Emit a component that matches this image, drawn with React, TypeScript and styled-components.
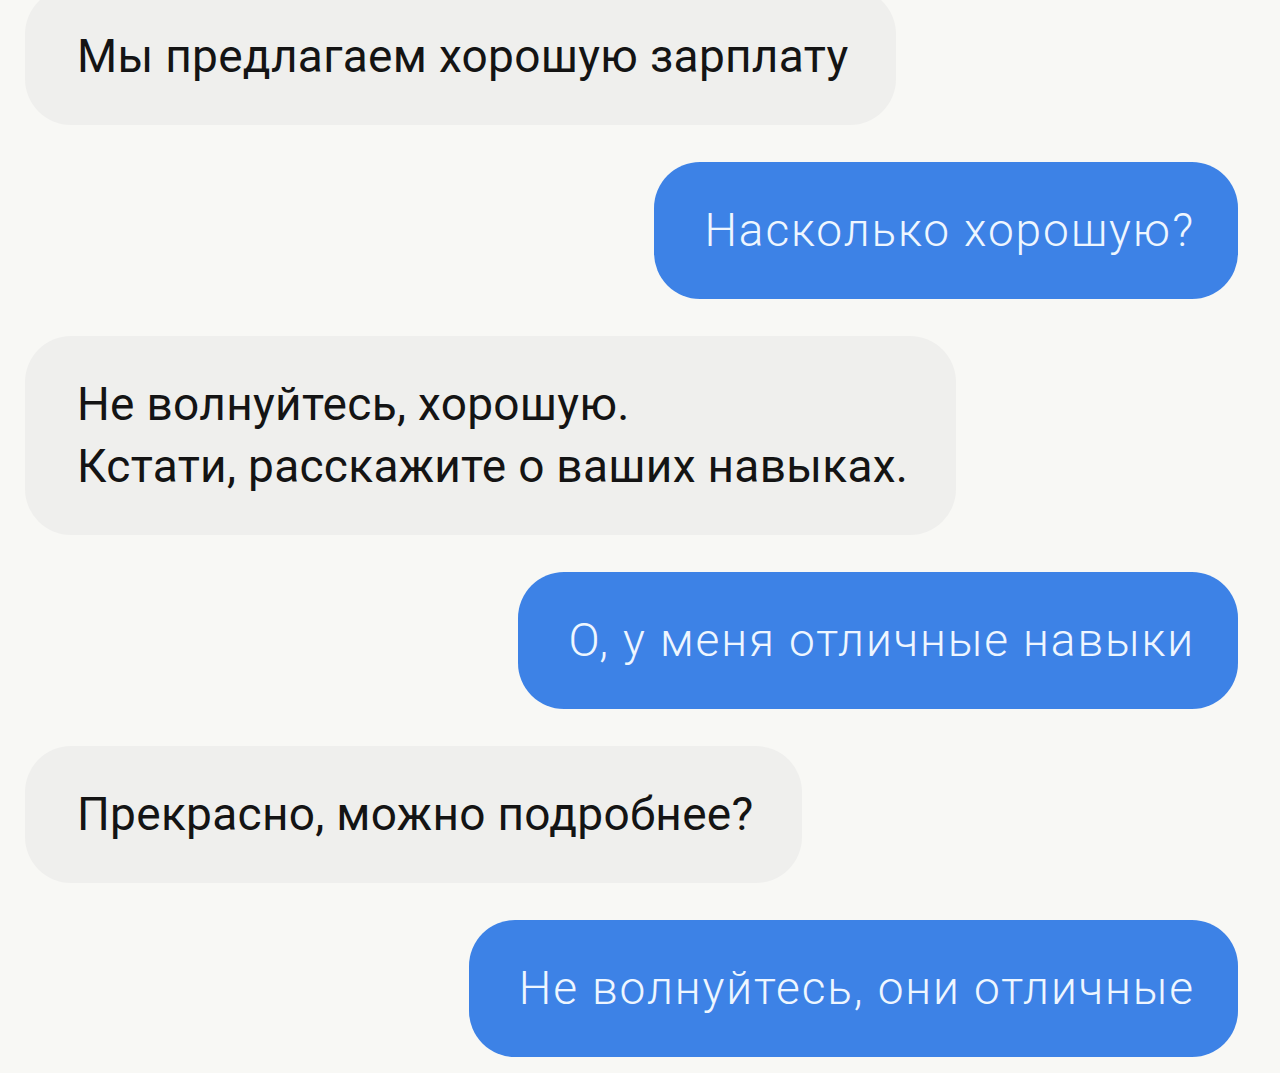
import styled, { createGlobalStyle } from "styled-components";

const Global = createGlobalStyle`
  html, body {
    margin: 0;
    padding: 0;
    background: #f8f8f5;
  }
  body {
    font-family: Roboto, "Noto Sans", "Liberation Sans", sans-serif;
    overflow: hidden;
  }
`;

const Chat = styled.main`
  display: flex;
  flex-direction: column;
  gap: 37px;
  padding: 0 42px 0 25px;
  margin-top: -12px;
  width: 1280px;
  height: 1085px;
  box-sizing: border-box;
`;

const Bubble = styled.div<{ $mine?: boolean }>`
  align-self: ${(p) => (p.$mine ? "flex-end" : "flex-start")};
  background: ${(p) => (p.$mine ? "#3d82e6" : "#efefed")};
  color: ${(p) => (p.$mine ? "#eef6ff" : "#141414")};
  font-size: 46px;
  font-weight: ${(p) => (p.$mine ? 300 : 400)};
  letter-spacing: ${(p) => (p.$mine ? "1.9px" : "0.3px")};
  line-height: 62px;
  padding: ${(p) => (p.$mine ? "37px 43px 38px 50px" : "37px 48px 38px 52px")};
  border-radius: 46px;
  white-space: nowrap;
`;

const messages: { text: string[]; mine?: boolean }[] = [
  { text: ["Мы предлагаем хорошую зарплату"] },
  { text: ["Насколько хорошую?"], mine: true },
  { text: ["Не волнуйтесь, хорошую.", "Кстати, расскажите о ваших навыках."] },
  { text: ["О, у меня отличные навыки"], mine: true },
  { text: ["Прекрасно, можно подробнее?"] },
  { text: ["Не волнуйтесь, они отличные"], mine: true },
];

const App = () => {
  return (
    <>
      <Global />
      <Chat>
        {messages.map((m, i) => (
          <Bubble key={i} $mine={m.mine}>
            {m.text.map((line, j) => (
              <div key={j}>{line}</div>
            ))}
          </Bubble>
        ))}
      </Chat>
    </>
  );
};

export default App;
